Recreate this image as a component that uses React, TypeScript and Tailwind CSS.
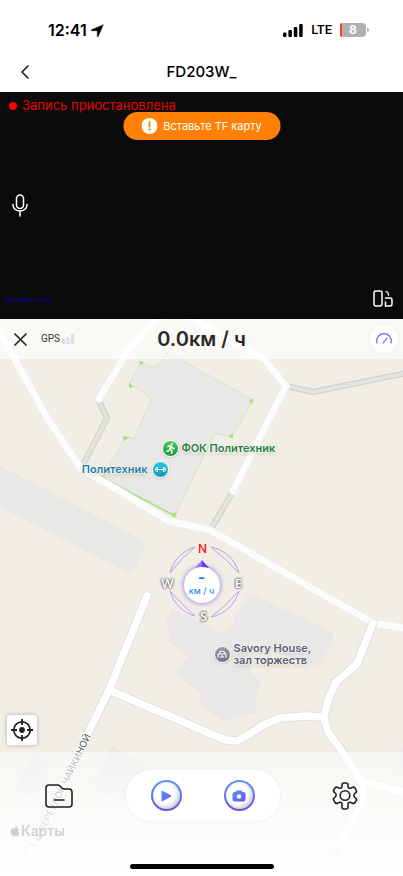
import React from "react";
import { FaApple, FaRunning } from "react-icons/fa";

const inter = "font-['Inter','Noto_Sans',sans-serif]";

function StatusBar() {
  return (
    <div className="flex h-[52px] items-center justify-between pt-2 pr-[37px] pl-12">
      <div className="flex items-center gap-1">
        <span className="text-base font-semibold">12:41</span>
        <svg width="13" height="13" viewBox="0 0 13 13" aria-hidden="true">
          <path d="M12.3.7 7.2 12.4c-.3.6-.9.5-.9-.1V6.7H.8c-.7 0-.8-.6-.2-.9Z" fill="#000" stroke="#000" strokeWidth=".5" strokeLinejoin="round" />
        </svg>
      </div>
      <div className="flex items-center gap-2">
        <svg width="20" height="13" viewBox="0 0 20 13" aria-hidden="true">
          <rect x="0" y="8.5" width="3.5" height="4.5" rx="1" />
          <rect x="5.4" y="6" width="3.5" height="7" rx="1" />
          <rect x="10.8" y="3" width="3.5" height="10" rx="1" />
          <rect x="16.2" y="0" width="3.5" height="13" rx="1" />
        </svg>
        <span className="font-['Roboto',sans-serif] text-[13px] font-medium">LTE</span>
        <div className="relative flex h-[14px] w-[26px] items-center justify-center rounded bg-[#b0b0b0]">
          <span className="absolute inset-y-0 left-0 w-[2px] rounded-l bg-[#ff3b30]" />
          <span className="text-xs leading-none font-bold text-white">8</span>
          <span className="absolute top-[5px] -right-[3px] h-1 w-[2px] rounded-r bg-[#b0b0b0]" />
        </div>
      </div>
    </div>
  );
}

function TitleBar() {
  return (
    <header className="grid h-10 grid-cols-[48px_1fr_48px] items-center">
      <button aria-label="Назад" className="flex h-10 items-center justify-center pl-[2px]">
        <svg width="10" height="14" viewBox="0 0 10 14" fill="none" stroke="#222" strokeWidth="1.7" strokeLinecap="round" strokeLinejoin="round">
          <path d="M8 1 2 7l6 6" />
        </svg>
      </button>
      <h1 className="text-center text-[15px] leading-5 font-medium">FD203W_</h1>
    </header>
  );
}

function Video() {
  return (
    <section className="relative flex h-[227px] flex-col bg-[#0b0b0b]">
      <div className="flex h-7 items-center gap-[5px] pl-[9px] text-[13px] text-[#e60005]">
        <span className="size-2 rounded-full bg-[#ff0000]" />
        <span>Запись приостановлена</span>
      </div>
      <div role="alert" className="absolute top-5 left-1/2 flex h-7 w-[157px] -translate-x-1/2 items-center justify-center gap-[6px] rounded-full bg-[#ff8006] text-[11px] whitespace-nowrap text-white">
        <svg width="16" height="16" viewBox="0 0 16 16" aria-hidden="true">
          <circle cx="8" cy="8" r="8" fill="#fff" />
          <path d="M8 4v4.8" stroke="#ff8006" strokeWidth="1.8" strokeLinecap="round" />
          <circle cx="8" cy="11.7" r="1.1" fill="#ff8006" />
        </svg>
        <span>Вставьте TF карту</span>
      </div>
      <div className="flex flex-1 items-center pt-3 pl-3">
        <button aria-label="Микрофон">
          <svg width="16" height="23" viewBox="0 0 16 23" fill="none" stroke="#fff" strokeWidth="1.5" strokeLinecap="round">
            <rect x="4.5" y="1" width="7" height="13.5" rx="3.5" />
            <path d="M1 10.500v.5a7 6 0 0 0 14 0v-.5M8 17v5" />
          </svg>
        </button>
      </div>
      <div className="flex h-10 items-center justify-between pr-[10px] pl-1">
        <time className="pt-1 font-['Liberation_Sans',sans-serif] text-[5px] text-[#0b00b8]">27/04/2025 12:41:08</time>
        <button aria-label="Повернуть экран">
          <svg width="20" height="18" viewBox="0 0 20 18" fill="none" stroke="#fff" strokeWidth="1.5" strokeLinecap="round">
            <rect x="1" y="1" width="8" height="15" rx="2" />
            <path d="M12.5 8H17a2 2 0 0 1 2 2v4a2 2 0 0 1-2 2h-4.500V12" />
            <path d="M13 1.500c1.800.5 2.500 1.600 2.600 3.800" strokeWidth="1.2" />
          </svg>
        </button>
      </div>
    </section>
  );
}

const roads = [
  "M-4 323 12 354 46 416 81 469 116 489 169 521 210 530 373 623 410 629",
  "M99 399 128 350 160 316",
  "M188 316 265 360 286 386 233 491",
];
const brightRoads = [
  "M147 596 109 690 35 842 20 880",
  "M109 690 225 740 237 741 250 734 263 725 280 718 305 716 324 717",
  "M373 623 357 664 336 682 328 700 324 717 328 732 341 750 352 766 363 784 363 800 340 845 318 890",
  "M361 781 410 794",
];
const footpaths = ["m99 401 8 17-25 49", "m286 386 27 6 94-19", "m233 491-22 38"];

function MapDrawing() {
  return (
    <svg className="absolute inset-0 h-full w-full overflow-visible" viewBox="0 319 403 557" preserveAspectRatio="xMidYMin meet" aria-hidden="true">
      <g fill="#e9e8e7" strokeLinejoin="round">
        <path d="M0 467 143 541 144 546 135 567 127 571 0 506Z" stroke="#e9e8e7" strokeWidth="2" />
        <path d="M141 362 153 367 158 366 167 352 253 400 232 437 215 433 175 515 103 478 125 437 134 438 152 398 129 384Z" stroke="#c8e6b0" strokeWidth=".7" />
        <path d="M173 610 195 621 228 637 227 632 232 626 238 625 234 619 250 594 332 633 332 640 320 664 308 664 249 638 250 673 260 682 255 698 255 713 240 715 223 720 200 703 202 693 177 674 189 657 169 640 171 632 167 620Z" stroke="#e9e8e7" strokeWidth="2" />
        <path d="M32 752 51 761 33 801 16 790ZM112 746 145 763 125 805 92 784ZM403 747V775L398 770Z" />
      </g>
      <path d="m129 388 4-1-4-5ZM139 361l5 1-3 3ZM253 399l-4 1 3 5ZM228 437l5-4v5ZM123 436l6 1-5 4ZM102 475l5 4-5 1ZM170 514l7-2-2 6ZM165 352l5 2-4 1Z" fill="#a9df7b" />
      <path d="m103 478 70 37" stroke="#acdf85" strokeWidth="1.5" />
      <g fill="none" strokeLinejoin="round">
        {footpaths.map((d) => <path key={d} d={d} stroke="#cfcfca" strokeWidth="6" />)}
        {footpaths.map((d) => <path key={d + "t"} d={d} stroke="#e3e3df" strokeWidth="4" />)}
      </g>
      <g fill="none" strokeLinecap="round" strokeLinejoin="round">
        {roads.map((d) => <path key={d} d={d} stroke="#e8e7e2" strokeWidth="8" />)}
        {roads.map((d) => <path key={d + "t"} d={d} stroke="#fcfcfc" strokeWidth="7" />)}
        {brightRoads.map((d) => <path key={d} d={d} stroke="#dededc" strokeWidth="9" />)}
        {brightRoads.map((d) => <path key={d + "t"} d={d} stroke="#fff" strokeWidth="7.4" />)}
      </g>
      <text transform="translate(36 849) rotate(-64)" className={inter} fontSize="9.4" fill="#555" stroke="#fff" strokeWidth="2" paintOrder="stroke">1-Й ПЕРЕУЛОК ЧАЙКИНОЙ</text>
      <text transform="translate(332 868) rotate(-62)" className={inter} fontSize="9" fill="#999">НОЙ</text>
    </svg>
  );
}

const halo = "[text-shadow:0_0_2px_#fff,0_0_2px_#fff,0_0_2px_#fff,0_2px_5px_#0003]";
const marker = "flex size-[17px] shrink-0 items-center justify-center rounded-full border border-white shadow";

function Compass() {
  const letter = "absolute flex size-4 items-center justify-center leading-none";
  const pale = " text-[13px] font-['Open_Sans',sans-serif] font-semibold text-white [text-shadow:0_0_2px_#555,0_0_2px_#777,0_0_3px_#888]";
  return (
    <div className="absolute top-[221px] left-[-42px] size-[86px]">
      <svg className="absolute inset-0" width="86" height="86" viewBox="0 0 86 86" aria-hidden="true">
        <defs>
          <filter id="glow" x="-50%" y="-50%" width="200%" height="200%"><feGaussianBlur stdDeviation="2" /></filter>
        </defs>
        <g fill="none" stroke="#b3a2ee" strokeWidth="1">
          <path d="M10 33A36 36 0 0 1 35 7Q22 17 10 33ZM51 7A36 36 0 0 1 79 33Q66 19 51 7ZM10 51A36 36 0 0 0 35 76Q22 65 10 51ZM51 77A36 36 0 0 0 79 51Q66 66 51 77Z" />
        </g>
        <circle cx="42" cy="45" r="19" fill="#7a5cf0" opacity=".65" filter="url(#glow)" />
        <path d="m42 20-7 8h7Z" fill="#8f79f5" /><path d="m42 20 7 8h-7Z" fill="#5b3fe0" />
        <circle cx="42" cy="45" r="18" fill="#fff" />
      </svg>
      <span className={letter + " top-px left-[35px] text-xs font-medium text-[#fa1414]"}>N</span>
      <span className={letter + " top-[35px] left-0" + pale}>W</span>
      <span className={letter + " top-[35px] left-[71px]" + pale}>E</span>
      <span className={letter + " top-[68px] left-9" + pale}>S</span>
      <div className="absolute top-[30px] left-6 flex w-9 flex-col items-center text-[#137cf0]">
        <span className="text-base leading-[14px] font-semibold">-</span>
        <span className="text-[9px] leading-[14px] font-normal whitespace-nowrap">км / ч</span>
      </div>
    </div>
  );
}

function Pins() {
  return (
    <div className="absolute inset-y-0 left-1/2 w-0 text-[11px] font-semibold whitespace-nowrap">
      <div className={"absolute top-[121px] left-[-40px] flex items-center gap-[3px] text-[#24803f] " + halo}>
        <span className={marker + " bg-linear-to-b from-[#45ca5c] to-[#149a3a]"}><FaRunning size={11} color="#fff" /></span>
        <span>ФОК Политехник</span>
      </div>
      <div className={"absolute top-[142px] right-[33px] flex items-center gap-[4px] text-[#1b7e9f] " + halo}>
        <span>Политехник</span>
        <span className={marker + " bg-linear-to-b from-[#29cbe4] to-[#109bb9]"}>
          <svg width="11" height="5" viewBox="0 0 11 5" fill="#fff"><path d="M1.500 0H3v5H1.500ZM8 0h1.500v5H8ZM0 1.500h1v2H0ZM10 1.500h1v2h-1ZM3 2h5v1H3Z" /></svg>
        </span>
      </div>
      <div className={"absolute top-[323px] left-3 flex items-center gap-[3px] leading-3 text-[#5b5d70] " + halo}>
        <span className={marker + " bg-linear-to-b from-[#9a9da8] to-[#727581]"}>
          <svg width="10" height="8" viewBox="0 0 10 8" fill="none" stroke="#fff"><path d="M1 8V4h8v4M2 4q0-3 3-3t3 3M4 8V6h2v2" /></svg>
        </span>
        <span>Savory House,<br />зал торжеств</span>
      </div>
      <Compass />
    </div>
  );
}

function SpeedBar() {
  return (
    <div className="relative grid h-10 grid-cols-[1fr_auto_1fr] items-center bg-white/65 px-[5px]">
      <div className="flex items-center gap-[14px] pl-[9px]">
        <button aria-label="Закрыть">
          <svg width="13" height="13" viewBox="0 0 13 13" stroke="#222" strokeWidth="1.7" strokeLinecap="round"><path d="m1 1 11 11M12 1 1 12" /></svg>
        </button>
        <div className="flex items-center gap-[2px]">
          <span className="font-['Liberation_Sans_Narrow','Roboto',sans-serif] text-[10px] leading-4 text-[#333]">GPS</span>
          <svg width="12" height="10" viewBox="0 0 12 10" fill="#dcdfe7"><path d="M0 5h3v5H0ZM4.500 3h3v7h-3ZM9 0h3v10H9Z" /></svg>
        </div>
      </div>
      <div className="text-xl leading-7 font-semibold text-[#292929]">0.0км / ч</div>
      <button aria-label="Спидометр" className="flex size-7 items-center justify-center justify-self-end rounded-full bg-white shadow-[0_0_3px_#0001]">
        <svg width="18" height="12" viewBox="0 0 18 12" fill="none" stroke="#7964f3" strokeLinecap="round" strokeWidth="1.2"><path d="M2 10A7.300 7.300 0 1 1 16 10M8 10l4-5" /></svg>
      </button>
    </div>
  );
}

function RoundIcon({ children }: { children: React.ReactNode }) {
  return (
    <span className="flex size-[31px] rounded-full bg-linear-to-b from-[#5b94f8] to-[#6c4fe6] p-[2px]">
      <span className="flex flex-1 items-center justify-center rounded-full bg-white shadow-[inset_-2px_-2px_4px_#0003]">{children}</span>
    </span>
  );
}

function Controls() {
  return (
    <nav className="relative flex h-[124px] flex-col bg-linear-to-b from-white/50 via-white/80 via-60% to-white pt-[18px] pb-[7px]">
      <div className="flex items-center justify-between px-[45px]">
        <button aria-label="Файлы">
          <svg width="28" height="24" viewBox="0 0 28 24" fill="none" stroke="#222" strokeWidth="1.6" strokeLinecap="round" strokeLinejoin="round">
            <path d="M4 1h9q1 0 2 1l2 2q1 1 2 1h5q3 0 3 3v12q0 3-3 3H4q-3 0-3-3V4q0-3 3-3ZM9.500 16h9.500" />
          </svg>
        </button>
        <div className="flex h-[51px] w-[154px] items-center justify-between rounded-full bg-white px-[25px] shadow-[0_0_5px_#0000000d]">
          <button aria-label="Воспроизвести">
            <RoundIcon>
              <svg width="12" height="12" viewBox="0 0 12 12"><defs><linearGradient id="violet" x2="1" y2="1"><stop stopColor="#4f95fb" /><stop offset="1" stopColor="#7350e8" /></linearGradient></defs><path d="M2 1v10l9-5Z" fill="url(#violet)" stroke="url(#violet)" strokeLinejoin="round" /></svg>
            </RoundIcon>
          </button>
          <button aria-label="Сделать снимок">
            <RoundIcon>
              <svg width="14" height="12" viewBox="0 0 14 12"><path d="M4.500.500h5l1 1.500h1q2 0 2 2v5.500q0 2-2 2h-9q-2 0-2-2V4q0-2 2-2h1Z" fill="url(#violet)" /><circle cx="7" cy="6.500" r="2.200" fill="#fff" /></svg>
            </RoundIcon>
          </button>
        </div>
        <button aria-label="Настройки">
          <svg width="26" height="28" viewBox="0 0 26 28" fill="none" stroke="#222" strokeWidth="1.6" strokeLinejoin="round">
            <path d="M10 3Q10 1 12 1h2q2 0 2 2v1q0 3 3 2l1-.5q2-1 3 .5l1.300 2.500q.8 1.500-1 2.500-3 2.500 0 5 1.800 1 1 2.500L23 20.500q-1 1.500-3 .5l-1-.5q-3-1-3 2v2.500q0 2-2 2h-2q-2 0-2-2V22.500q0-3-3-2L6 21q-2 1-3-.5L1.700 18q-.8-1.500 1-2.500 3-2.500 0-5-1.800-1-1-2.500L3 6q1-1.500 3-.5L7 6q3 1 3-2Z" />
            <circle cx="13" cy="13.500" r="4.800" />
          </svg>
        </button>
      </div>
      <div className="flex h-5 items-center pl-[9px] text-sm font-medium text-[#cfcfcf]">
        <FaApple size={12} /><span>Карты</span>
      </div>
      <div className="mx-auto mt-auto h-[5px] w-36 rounded-full bg-black" />
    </nav>
  );
}

export default function App() {
  return (
    <main className={"flex min-h-screen flex-col bg-white " + inter}>
      <StatusBar />
      <TitleBar />
      <Video />
      <section className="relative flex min-h-[557px] flex-1 flex-col overflow-hidden bg-[#f1eee6]">
        <MapDrawing />
        <SpeedBar />
        <Pins />
        <button aria-label="Моё местоположение" className="relative mt-auto mb-[7px] ml-[7px] flex size-[30px] items-center justify-center rounded-[3px] bg-white shadow-[0_0_4px_#0004]">
          <svg width="22" height="22" viewBox="0 0 22 22" fill="none" stroke="#222" strokeWidth="1.8">
            <circle cx="11" cy="11" r="8.2" /><path d="M11 0v6M11 16v6M0 11h6M16 11h6" /><circle cx="11" cy="11" r="2" fill="#222" />
          </svg>
        </button>
        <Controls />
      </section>
    </main>
  );
}
